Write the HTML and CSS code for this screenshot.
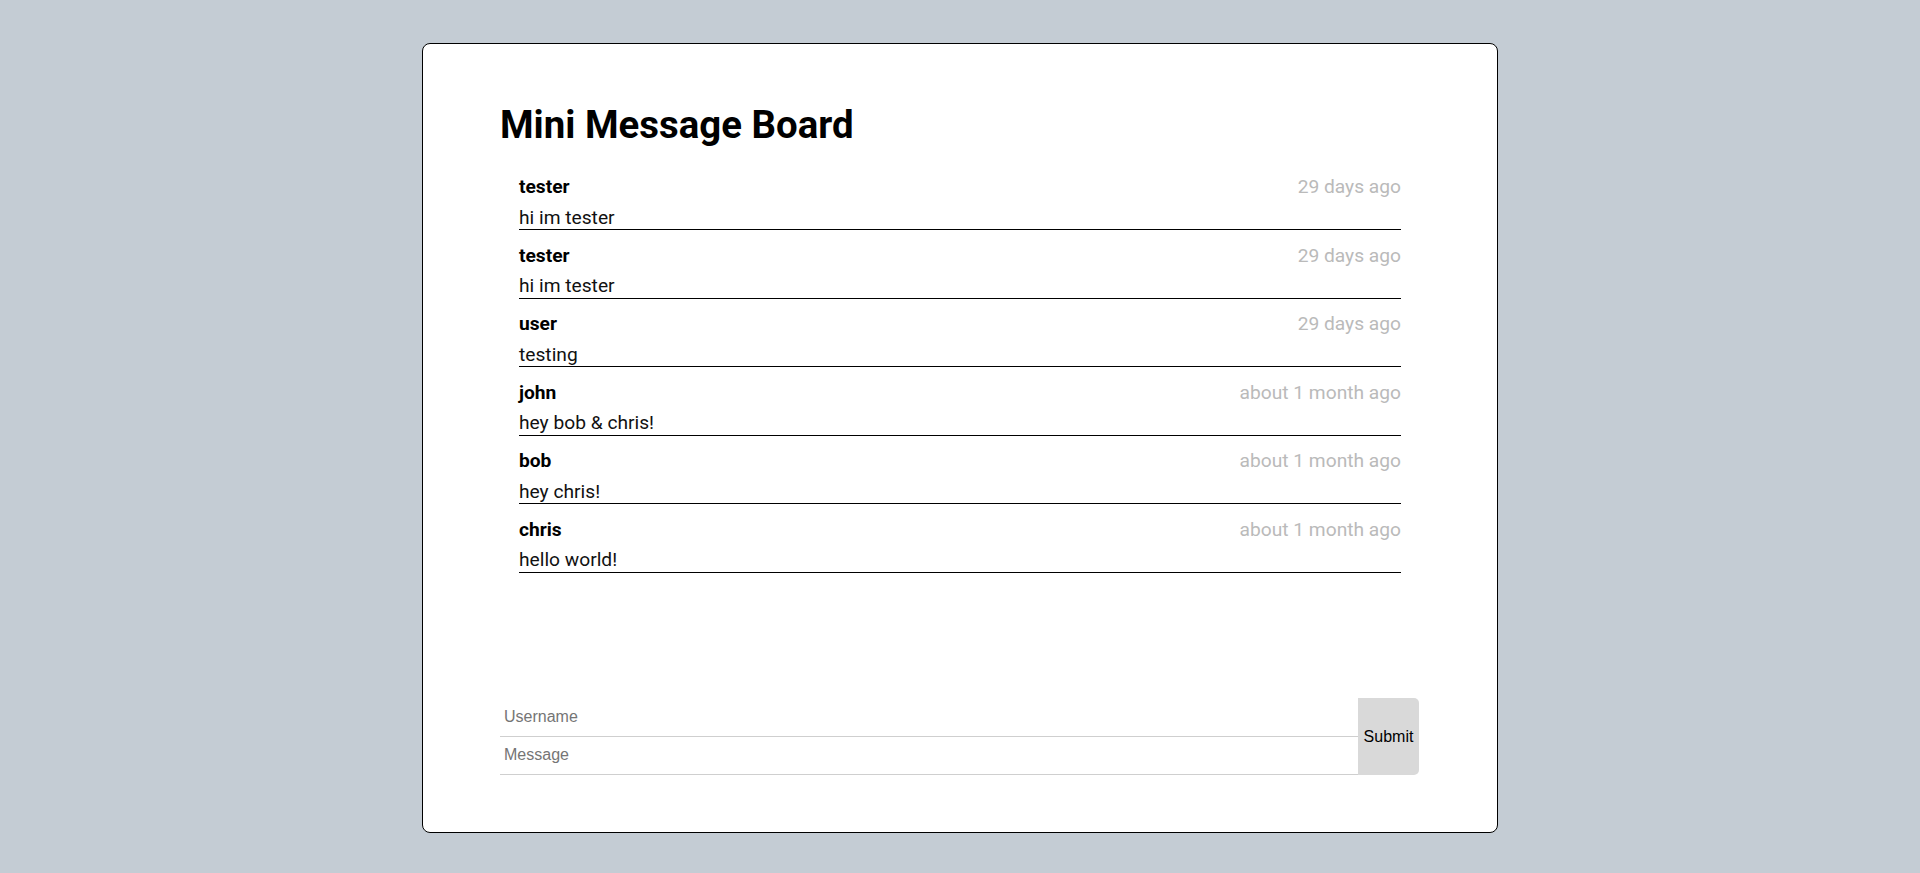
FILE: index.html
```html
<!DOCTYPE html>
<html lang="en">
<head>
<meta charset="utf-8">
<title>Mini Message Board</title>
<link rel="stylesheet" href="styles.css">
</head>
<body>
<main class="card">
  <h1 class="title">Mini Message Board</h1>
  <ul class="messages">
    <li class="message">
      <div class="message-head"><span class="user">tester</span><span class="time">29 days ago</span></div>
      <div class="text">hi im tester</div>
    </li>
    <li class="message">
      <div class="message-head"><span class="user">tester</span><span class="time">29 days ago</span></div>
      <div class="text">hi im tester</div>
    </li>
    <li class="message">
      <div class="message-head"><span class="user">user</span><span class="time">29 days ago</span></div>
      <div class="text">testing</div>
    </li>
    <li class="message">
      <div class="message-head"><span class="user">john</span><span class="time">about 1 month ago</span></div>
      <div class="text">hey bob &amp; chris!</div>
    </li>
    <li class="message">
      <div class="message-head"><span class="user">bob</span><span class="time">about 1 month ago</span></div>
      <div class="text">hey chris!</div>
    </li>
    <li class="message">
      <div class="message-head"><span class="user">chris</span><span class="time">about 1 month ago</span></div>
      <div class="text">hello world!</div>
    </li>
  </ul>
  <form class="composer">
    <div class="fields">
      <input class="field" type="text" name="username" placeholder="Username">
      <input class="field" type="text" name="message" placeholder="Message">
    </div>
    <button class="submit" type="submit">Submit</button>
  </form>
</main>
</body>
</html>
```
FILE: styles.css
```css
* {
  box-sizing: border-box;
}

html, body {
  margin: 0;
  padding: 0;
}

body {
  background: #c4ccd4;
  font-family: Roboto, "Liberation Sans", sans-serif;
  color: #000;
  padding-top: 43px;
}

.card {
  width: 1076px;
  height: 790px;
  margin: 0 auto;
  background: #fff;
  border: 1px solid #000;
  border-radius: 8px;
  padding: 58px 78px 57px 77px;
  display: flex;
  flex-direction: column;
}

.title {
  margin: 0 0 29px 0;
  font-size: 38.4px;
  font-weight: 700;
  line-height: 45px;
}

.messages {
  list-style: none;
  margin: 0 18px 0 19px;
  padding: 0;
  display: flex;
  flex-direction: column;
  gap: 14.5px;
}

.message {
  border-bottom: 1px solid #000;
  font-size: 19.2px;
  line-height: 22.5px;
}

.message-head {
  display: flex;
  justify-content: space-between;
  margin-bottom: 8px;
}

.user {
  font-weight: 700;
}

.time {
  color: #bababa;
}

.text {
  color: #111;
}

.composer {
  margin-top: auto;
  display: flex;
  align-items: stretch;
}

.fields {
  flex: 1;
  display: flex;
  flex-direction: column;
}

.field {
  height: 38.5px;
  border: none;
  border-bottom: 1px solid #cfcfcf;
  padding: 0 4px;
  font-family: "Liberation Sans", Arial, sans-serif;
  font-size: 16px;
  color: #000;
  outline: none;
  background: #fff;
}

.field::placeholder {
  color: #757575;
}

.submit {
  width: 61px;
  border: none;
  background: #d9d9d9;
  border-radius: 0 5px 5px 0;
  font-family: "Liberation Sans", Arial, sans-serif;
  font-size: 16px;
  color: #000;
  padding: 0;
}
```
